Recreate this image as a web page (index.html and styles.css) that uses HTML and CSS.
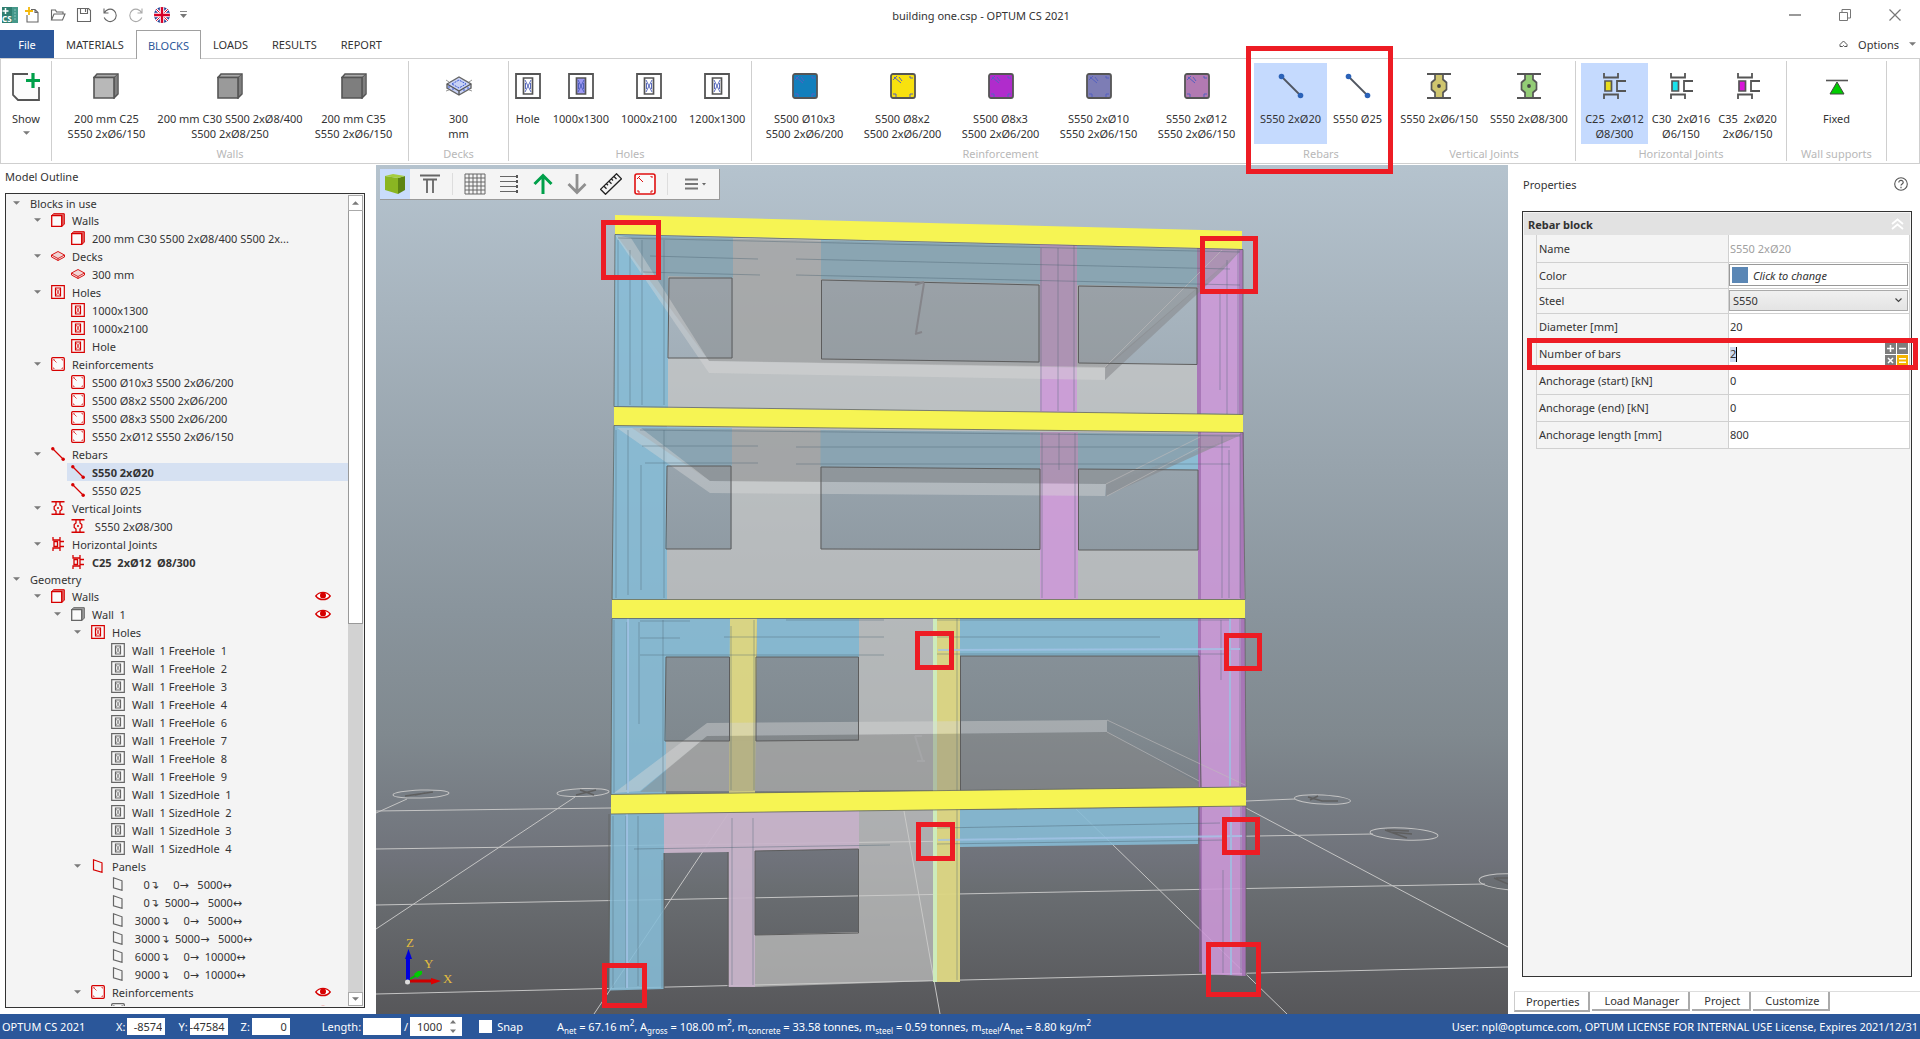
FILE: index.html
```html
<!DOCTYPE html>
<html lang="en">
<head>
<meta charset="utf-8">
<title>building one.csp - OPTUM CS 2021</title>
<link rel="stylesheet" href="styles.css">
</head>
<body>
<svg class="defs" aria-hidden="true">
  <defs>
    <symbol id="cube" viewBox="0 0 14 14"><path d="M.7 2.7 2.5.7h10.8v10.6l-2.6 2V2.7z" fill="currentColor" fill-opacity=".55" stroke="currentColor"/><path d="M.7 2.7h10v10.6h-10z" fill="#fafafa" stroke="currentColor" stroke-width="1.3"/></symbol>
    <symbol id="deck" viewBox="0 0 14 14"><path d="M.5 6 7 2.500 13.500 6v2L7 11.500.5 8z" fill="currentColor" fill-opacity=".12" stroke="currentColor" stroke-width=".9"/><path d="M.5 6 7 9.500 13.500 6M7 9.500v2" fill="none" stroke="currentColor" stroke-width=".8"/></symbol>
    <symbol id="hole" viewBox="0 0 14 14"><path d="M.7.7h12.600v12.600H.7z" fill="#fafafa" stroke="currentColor" stroke-width="1.200"/><path d="M4.500 3h5v8h-5z" fill="none" stroke="currentColor" stroke-width="1.200"/><path d="M5.500 4l3 6M8.500 4l-3 6" stroke="currentColor" stroke-width=".7"/></symbol>
    <symbol id="reinf" viewBox="0 0 14 14"><rect x=".7" y=".7" width="12.600" height="12.600" rx="1" fill="#fafafa" stroke="currentColor" stroke-width="1.300"/><path d="M2 3.500l1.500-1.500M2.500 2.500l3 3M2 11h1v1M12 11h-1v1M12 3h-1V2" fill="none" stroke="currentColor" stroke-width=".7"/></symbol>
    <symbol id="rebar" viewBox="0 0 14 14"><path d="M2 2l10 10" stroke="currentColor" stroke-width="1.300"/><circle cx="1.800" cy="1.800" r="1.700" fill="currentColor"/><circle cx="12.200" cy="12.200" r="1.700" fill="currentColor"/></symbol>
    <symbol id="vj" viewBox="0 0 14 14"><path d="M.5.8h13M.5 13.200h13" stroke="currentColor" stroke-width="1.400"/><path d="M5 1v3L3.200 5.500v3L5 10v3M9 1v3l1.800 1.500v3L9 10v3" fill="none" stroke="currentColor" stroke-width="1.300"/><circle cx="7" cy="7" r="1" fill="currentColor"/></symbol>
    <symbol id="hj" viewBox="0 0 14 14"><path d="M2 0v3h7V0M2 14v-3h7v3M13 4.500H9v5h4" fill="none" stroke="currentColor" stroke-width="1.300"/><path d="M3 4.500h3.500v5H3z" fill="none" stroke="currentColor" stroke-width="1.300"/></symbol>
    <symbol id="panel" viewBox="0 0 14 14"><path d="M2.500.8l8.500 3v9.500l-8.500-2.500z" fill="none" stroke="currentColor" stroke-width="1.200"/></symbol>
    <symbol id="eye" viewBox="0 0 16 10"><path d="M.8 5C4.500.2 11.500.2 15.200 5 11.500 9.800 4.500 9.800.8 5z" fill="#fff" stroke="#d60000" stroke-width="1.400"/><circle cx="8" cy="4.600" r="3" fill="#d60000"/></symbol>
    <symbol id="bigcube" viewBox="0 0 26 26"><path d="M1 4.500 4 1h21v20l-4 4V4.500z" fill="#aaa" stroke="#555" stroke-width="1.500"/><path d="M1 4.500h20V25H1z" fill="currentColor" stroke="#555" stroke-width="1.600"/><path d="M21 4.500 25 1M23 3v20" stroke="#555"/></symbol>
    <symbol id="bighole" viewBox="0 0 26 26"><path d="M1 1h24v24H1z" fill="#fff" stroke="#555" stroke-width="1.800"/><path d="M8.500 5h9v16h-9z" fill="currentColor" stroke="#555" stroke-width="1.700"/><path d="M10 7l6 12M16 7l-6 12M10.500 10v6M15.500 10v6" stroke="#4659b5" stroke-width=".9"/></symbol>
    <symbol id="bigreinf" viewBox="0 0 26 26"><rect x="1" y="1" width="24" height="24" rx="2" fill="currentColor" stroke="#555" stroke-width="1.800"/><path d="M3 7l4-4M4 4l7 6M9 4l3 4M3 21h3v3M23 21h-3v3M23 5h-3V3" fill="none" stroke="#5560c0" stroke-width="1"/></symbol>
    <symbol id="bigrebar" viewBox="0 0 26 26"><path d="M3 3l20 20" stroke="#4f5560" stroke-width="1.800"/><circle cx="3.500" cy="3.500" r="2.800" fill="#2b62b8"/><circle cx="22.500" cy="22.500" r="2.800" fill="#2b62b8"/></symbol>
    <symbol id="bigvj" viewBox="0 0 26 26"><path d="M9 1v5.500L5.500 9.500v7L9 19.500V25h8v-5.500l3.500-3v-7L17 6.500V1z" fill="currentColor" stroke="#555" stroke-width="1.700"/><path d="M1 1h24M1 25h24" stroke="#555" stroke-width="1.800"/><circle cx="13" cy="13" r="1.900" fill="#444"/></symbol>
    <symbol id="bighj" viewBox="0 0 26 26"><path d="M3 0v4.500h14V0M3 26v-4.500h14V26M25 8h-9v10h9" fill="none" stroke="#555" stroke-width="1.800"/><path d="M4 8h6.500v10H4z" fill="currentColor" stroke="#555" stroke-width="1.700"/></symbol>
    <symbol id="caret" viewBox="0 0 8 4"><path d="M0 0h8L4 4z" fill="currentColor"/></symbol>
  </defs>
</svg>

<header class="titlebar">
  <div class="quick">
    <svg class="ico16" viewBox="0 0 16 16"><path fill="#2f7f70" d="M0 0h16v16H0z"/><path d="M10 0h6v16h-6z" fill="#45988a"/><path d="M3.500 1v6M.5 4h6" stroke="#fff" stroke-width="1.500"/><text x="0" y="15" class="logo-text">CS</text><path d="M12 3h2M12 6h2M12 9h2M12 12h2" stroke="#8cc5bb"/></svg>
    <button aria-label="New"><svg class="ico16" viewBox="0 0 16 16"><path d="M7 2.500h4l3 3V15H3V8M11 2.500v3h3" fill="none" stroke="#666" stroke-width="1.100"/><path d="M5 0v8M1 4h8" stroke="#f4b90a" stroke-width="1.800"/></svg></button>
    <button aria-label="Open"><svg class="ico16" viewBox="0 0 16 16"><path d="M1.500 13V3h4l1 2H13v2M1.500 13l2.500-6h11l-2.500 6z" fill="none" stroke="#666" stroke-width="1.100"/></svg></button>
    <button aria-label="Save"><svg class="ico16" viewBox="0 0 16 16"><path d="M1.500 1.500h11l2 2v11h-13zM4.500 1.500v5h7v-5M9.500 2v3" fill="none" stroke="#666" stroke-width="1.100"/></svg></button>
    <button aria-label="Undo"><svg class="ico16" viewBox="0 0 16 16"><path d="M2 1.500v4.500h4.500M2.300 6a6.200 6.200 0 1 1-.1 4.500" fill="none" stroke="#666" stroke-width="1.100"/></svg></button>
    <button aria-label="Redo"><svg class="ico16" viewBox="0 0 16 16"><path d="M14 1.500v4.500H9.500M13.700 6a6.200 6.200 0 1 0 .1 4.500" fill="none" stroke="#aaa" stroke-width="1.100"/></svg></button>
    <button aria-label="Language"><svg class="ico16" viewBox="0 0 16 16"><clipPath id="fl"><circle cx="8" cy="8" r="8"/></clipPath><g clip-path="url(#fl)"><path d="M0 0h16v16H0z" fill="#1f3f94"/><path d="M0 0l16 16M16 0 0 16" stroke="#fff" stroke-width="2.600"/><path d="M0 0l16 16M16 0 0 16" stroke="#d80027" stroke-width="1"/><path d="M8 0v16M0 8h16" stroke="#fff" stroke-width="4.400"/><path d="M8 0v16M0 8h16" stroke="#d80027" stroke-width="2.400"/></g></svg></button>
    <button class="more" aria-label="More"><svg width="7" height="8" viewBox="0 0 7 8"><path d="M0 .5h7" stroke="#888"/><path d="M0 3h7L3.500 7z" fill="#777"/></svg></button>
  </div>
  <h1>building one.csp - OPTUM CS 2021</h1>
  <div class="winctl">
    <button aria-label="Minimize"><svg width="12" height="12"><path d="M0 6h12" stroke="#999" stroke-width="2"/></svg></button>
    <button aria-label="Restore"><svg width="12" height="12"><path d="M.5 3.500h8v8h-8zM3 3.500v-3h8.500v8.500H8.500" fill="none" stroke="#777"/></svg></button>
    <button aria-label="Close"><svg width="12" height="12"><path d="M.5.5l11 11M11.500.5l-11 11" stroke="#777" stroke-width="1.200"/></svg></button>
  </div>
</header>

<nav class="tabs">
  <button class="file">File</button>
  <button>MATERIALS</button>
  <button class="on">BLOCKS</button>
  <button>LOADS</button>
  <button>RESULTS</button>
  <button>REPORT</button>
  <div class="options">
    <svg width="9" height="9" viewBox="0 0 9 9"><path d="M4.500 1 8 4.500v2H5.500L4.500 5.500l-1 1H1v-2z" fill="none" stroke="#555"/></svg>
    <button>Options</button>
    <svg class="dd"><use href="#caret"/></svg>
  </div>
</nav>

<section class="ribbon" aria-label="Blocks">
  <div class="group show"><div class="tools">
    <button><svg class="big" viewBox="0 0 28 28"><path d="M16 1H1v21l5 5h21V14" fill="#fcfcfc" stroke="#555" stroke-width="1.800"/><path d="M21 0v15M14 7.500h14" stroke="#00a04a" stroke-width="3.200"/></svg><span>Show</span><svg class="dd"><use href="#caret"/></svg></button>
  </div></div>
  <div class="group walls"><div class="tools">
    <button><svg class="big c25"><use href="#bigcube"/></svg><span>200 mm C25<br>S550 2xØ6/150</span></button>
    <button><svg class="big c30"><use href="#bigcube"/></svg><span>200 mm C30 S500 2xØ8/400<br>S500 2xØ8/250</span></button>
    <button><svg class="big c35"><use href="#bigcube"/></svg><span>200 mm C35<br>S550 2xØ6/150</span></button>
  </div><h2>Walls</h2></div>
  <div class="group decks"><div class="tools">
    <button><svg class="big" viewBox="0 0 26 26"><path d="M1 11 13 4l12 7v4l-12 7L1 15z" fill="#c9d2f5" stroke="#666" stroke-width="1.400"/><path d="M1 11l12 7 12-7M13 18v4" fill="none" stroke="#555" stroke-width="1.400"/><path d="M6 11l7-4 7 4-7 4zM3 13v3M7 15v3M18 16v3M22 14v2" fill="none" stroke="#3c5bd6" stroke-dasharray="2 1"/><path d="M0 7l3 2M26 7l-3 2M0 18l3-1M26 18l-3-1" stroke="#999"/></svg><span>300<br>mm</span></button>
  </div><h2>Decks</h2></div>
  <div class="group holes"><div class="tools">
    <button><svg class="big h0"><use href="#bighole"/></svg><span>Hole</span></button>
    <button><svg class="big h1"><use href="#bighole"/></svg><span>1000x1300</span></button>
    <button><svg class="big h0"><use href="#bighole"/></svg><span>1000x2100</span></button>
    <button><svg class="big h0"><use href="#bighole"/></svg><span>1200x1300</span></button>
  </div><h2>Holes</h2></div>
  <div class="group reinf"><div class="tools">
    <button><svg class="big r1"><use href="#bigreinf"/></svg><span>S500 Ø10x3<br>S500 2xØ6/200</span></button>
    <button><svg class="big r2"><use href="#bigreinf"/></svg><span>S500 Ø8x2<br>S500 2xØ6/200</span></button>
    <button><svg class="big r3"><use href="#bigreinf"/></svg><span>S500 Ø8x3<br>S500 2xØ6/200</span></button>
    <button><svg class="big r4"><use href="#bigreinf"/></svg><span>S550 2xØ10<br>S550 2xØ6/150</span></button>
    <button><svg class="big r5"><use href="#bigreinf"/></svg><span>S550 2xØ12<br>S550 2xØ6/150</span></button>
  </div><h2>Reinforcement</h2></div>
  <div class="group rebars"><div class="tools">
    <button class="sel"><svg class="big"><use href="#bigrebar"/></svg><span>S550 2xØ20</span></button>
    <button><svg class="big"><use href="#bigrebar"/></svg><span>S550 Ø25</span></button>
  </div><h2>Rebars</h2><span class="mark"></span></div>
  <div class="group vjoints"><div class="tools">
    <button><svg class="big v1"><use href="#bigvj"/></svg><span>S550 2xØ6/150</span></button>
    <button><svg class="big v2"><use href="#bigvj"/></svg><span>S550 2xØ8/300</span></button>
  </div><h2>Vertical Joints</h2></div>
  <div class="group hjoints"><div class="tools">
    <button class="sel"><svg class="big j1"><use href="#bighj"/></svg><span>C25&nbsp; 2xØ12<br>Ø8/300</span></button>
    <button><svg class="big j2"><use href="#bighj"/></svg><span>C30&nbsp; 2xØ16<br>Ø6/150</span></button>
    <button><svg class="big j3"><use href="#bighj"/></svg><span>C35&nbsp; 2xØ20<br>2xØ6/150</span></button>
  </div><h2>Horizontal Joints</h2></div>
  <div class="group supports"><div class="tools">
    <button><svg class="big" viewBox="0 0 26 26"><path d="M2 7.500h22" stroke="#555" stroke-width="1.600"/><path d="M13 9l7 12H6z" fill="#0c0" stroke="#444"/></svg><span>Fixed</span></button>
  </div><h2>Wall supports</h2></div>
</section>

<main>
  <aside class="outline">
    <h2>Model Outline</h2>
    <div class="treebox">
      <ul class="tree">
        <li class="root"><svg class="dd"><use href="#caret"/></svg>Blocks in use</li>
        <li class="l1"><svg class="dd"><use href="#caret"/></svg><svg class="ic"><use href="#cube"/></svg>Walls</li>
        <li class="l2"><svg class="ic"><use href="#cube"/></svg>200 mm C30 S500 2xØ8/400 S500 2x...</li>
        <li class="l1"><svg class="dd"><use href="#caret"/></svg><svg class="ic"><use href="#deck"/></svg>Decks</li>
        <li class="l2"><svg class="ic"><use href="#deck"/></svg>300 mm</li>
        <li class="l1"><svg class="dd"><use href="#caret"/></svg><svg class="ic"><use href="#hole"/></svg>Holes</li>
        <li class="l2"><svg class="ic"><use href="#hole"/></svg>1000x1300</li>
        <li class="l2"><svg class="ic"><use href="#hole"/></svg>1000x2100</li>
        <li class="l2"><svg class="ic"><use href="#hole"/></svg>Hole</li>
        <li class="l1"><svg class="dd"><use href="#caret"/></svg><svg class="ic"><use href="#reinf"/></svg>Reinforcements</li>
        <li class="l2"><svg class="ic"><use href="#reinf"/></svg>S500 Ø10x3 S500 2xØ6/200</li>
        <li class="l2"><svg class="ic"><use href="#reinf"/></svg>S500 Ø8x2 S500 2xØ6/200</li>
        <li class="l2"><svg class="ic"><use href="#reinf"/></svg>S500 Ø8x3 S500 2xØ6/200</li>
        <li class="l2"><svg class="ic"><use href="#reinf"/></svg>S550 2xØ12 S550 2xØ6/150</li>
        <li class="l1"><svg class="dd"><use href="#caret"/></svg><svg class="ic"><use href="#rebar"/></svg>Rebars</li>
        <li class="l2 picked"><svg class="ic"><use href="#rebar"/></svg><b>S550 2xØ20</b></li>
        <li class="l2"><svg class="ic"><use href="#rebar"/></svg>S550 Ø25</li>
        <li class="l1"><svg class="dd"><use href="#caret"/></svg><svg class="ic"><use href="#vj"/></svg>Vertical Joints</li>
        <li class="l2"><svg class="ic"><use href="#vj"/></svg> S550 2xØ8/300</li>
        <li class="l1"><svg class="dd"><use href="#caret"/></svg><svg class="ic"><use href="#hj"/></svg>Horizontal Joints</li>
        <li class="l2"><svg class="ic"><use href="#hj"/></svg><b>C25  2xØ12  Ø8/300</b></li>
        <li class="root"><svg class="dd"><use href="#caret"/></svg>Geometry</li>
        <li class="l1"><svg class="dd"><use href="#caret"/></svg><svg class="ic"><use href="#cube"/></svg>Walls<svg class="eye"><use href="#eye"/></svg></li>
        <li class="l2 open grey"><svg class="dd"><use href="#caret"/></svg><svg class="ic"><use href="#cube"/></svg>Wall  1<svg class="eye"><use href="#eye"/></svg></li>
        <li class="l3"><svg class="dd"><use href="#caret"/></svg><svg class="ic"><use href="#hole"/></svg>Holes</li>
        <li class="l4 grey"><svg class="ic"><use href="#hole"/></svg>Wall  1 FreeHole  1</li>
        <li class="l4 grey"><svg class="ic"><use href="#hole"/></svg>Wall  1 FreeHole  2</li>
        <li class="l4 grey"><svg class="ic"><use href="#hole"/></svg>Wall  1 FreeHole  3</li>
        <li class="l4 grey"><svg class="ic"><use href="#hole"/></svg>Wall  1 FreeHole  4</li>
        <li class="l4 grey"><svg class="ic"><use href="#hole"/></svg>Wall  1 FreeHole  6</li>
        <li class="l4 grey"><svg class="ic"><use href="#hole"/></svg>Wall  1 FreeHole  7</li>
        <li class="l4 grey"><svg class="ic"><use href="#hole"/></svg>Wall  1 FreeHole  8</li>
        <li class="l4 grey"><svg class="ic"><use href="#hole"/></svg>Wall  1 FreeHole  9</li>
        <li class="l4 grey"><svg class="ic"><use href="#hole"/></svg>Wall  1 SizedHole  1</li>
        <li class="l4 grey"><svg class="ic"><use href="#hole"/></svg>Wall  1 SizedHole  2</li>
        <li class="l4 grey"><svg class="ic"><use href="#hole"/></svg>Wall  1 SizedHole  3</li>
        <li class="l4 grey"><svg class="ic"><use href="#hole"/></svg>Wall  1 SizedHole  4</li>
        <li class="l3"><svg class="dd"><use href="#caret"/></svg><svg class="ic"><use href="#panel"/></svg>Panels</li>
        <li class="l4 grey"><svg class="ic"><use href="#panel"/></svg>    0↴     0→   5000↔</li>
        <li class="l4 grey"><svg class="ic"><use href="#panel"/></svg>    0↴  5000→   5000↔</li>
        <li class="l4 grey"><svg class="ic"><use href="#panel"/></svg> 3000↴     0→   5000↔</li>
        <li class="l4 grey"><svg class="ic"><use href="#panel"/></svg> 3000↴  5000→   5000↔</li>
        <li class="l4 grey"><svg class="ic"><use href="#panel"/></svg> 6000↴     0→  10000↔</li>
        <li class="l4 grey"><svg class="ic"><use href="#panel"/></svg> 9000↴     0→  10000↔</li>
        <li class="l3"><svg class="dd"><use href="#caret"/></svg><svg class="ic"><use href="#reinf"/></svg>Reinforcements<svg class="eye"><use href="#eye"/></svg></li>
        <li class="l4 grey"><svg class="ic"><use href="#reinf"/></svg>Reinforcement<svg class="eye"><use href="#eye"/></svg></li>
      </ul>
      <div class="scroll">
        <button class="up" aria-label="Scroll up"><svg class="dd"><use href="#caret"/></svg></button>
        <div class="thumb"></div>
        <div class="track"></div>
        <button aria-label="Scroll down"><svg class="dd"><use href="#caret"/></svg></button>
      </div>
    </div>
  </aside>

  <section class="view" aria-label="3D view">
    <svg class="scene" viewBox="376 165 1132 849" preserveAspectRatio="xMidYMid slice">
      <defs><linearGradient id="sky" x1="0" y1="0" x2="0" y2="1">
        <stop offset="0" stop-color="#b5c3ce"/><stop offset=".53" stop-color="#89949c"/><stop offset=".67" stop-color="#80898f"/><stop offset=".82" stop-color="#6f727a"/><stop offset=".85" stop-color="#6a6e72"/><stop offset="1" stop-color="#57575a"/>
      </linearGradient></defs>
      <path d="M376 165h1132v849H376z" fill="url(#sky)"/>
      <g class="grid">
        <path d="M376 811 611 808M376 849 960 841M376 905 1485 884M376 994 1508 967M1246 801 1295 799M1200 837 1373 834M376 813 407 799M376 929 575 797M594 1014 728 814M904 811 940 1014M1076 809 1287 1014M1246 808 1508 947"/>
        <ellipse cx="421" cy="794" rx="28" ry="4" transform="rotate(-2 421 794)"/><ellipse cx="583" cy="792.500" rx="26" ry="4" transform="rotate(-2 583 792)"/>
        <ellipse cx="1322.500" cy="799.500" rx="28" ry="4.500" transform="rotate(3 1322 799)"/><ellipse cx="1404" cy="834" rx="34" ry="6" transform="rotate(3 1404 834)"/><ellipse cx="1513" cy="882" rx="34" ry="8" transform="rotate(3 1513 882)"/>
      </g>
      <path class="mark3d" d="M405 796l28-4M415 795l10-2M576 795l20-5M580 790l14 5M1308 797l14 4 16 0M1310 800l8-4M1385 830l22 8M1387 830l22 1M1390 832l22 2M1494 878l14 6M1496 878h12"/>
      <g class="concrete">
        <path fill-rule="evenodd" d="M668 236 1197 248V414L668 408zM669 278H733V358H669zM821 280 1040 285V363L821 359zM1078 286 1197 288V364L1078 363z"/>
        <path fill-rule="evenodd" d="M667 426 1198 432V600H667zM667 466H731.500V549H667zM820.500 467 1040 469V550L820.500 549zM1078 469 1198 470V550H1078z"/>
        <path d="M859 618h75v172h-75zM666 741h193v50H666zM859 811 934 809V981L755 987V935L859 932z"/>
      </g>
      <g class="blue">
        <path d="M615 234 668 236V408L614 407zM668 236 733 238V278L668 276zM821 240 1040 245V284L821 279zM1077 246 1197 249V287L1077 285z"/>
        <path d="M613.500 426 667 427V600H612.500zM667 427 732 428V466H667zM820.500 430 1040 432V469L820.500 467zM1078 433 1198 434V470L1078 469z"/>
        <path d="M612 618H666V794L611 795zM666 618H730V657H666zM757 618H859V657H757zM960 618H1198V656H960z"/>
        <path d="M611 814 664 813V989L609 990.500zM960 810 1198 807V844L960 847z"/>
      </g>
      <g class="purple">
        <path d="M1040 244 1077 245V413L1040 412zM1197 248 1243 249V414L1197 413z"/>
        <path d="M1040 432H1078V599H1040zM1198 432H1243L1245 599H1198z"/>
        <path d="M1198 618H1245L1246 787H1199zM1200 807 1246 805V976L1202 974z"/>
      </g>
      <path class="pside" d="M1197 248h4v166h-4zM1239 249h4v166h-4zM1198 432h3v167h-3zM1240 432h4v167h-4zM1198 618h3v169h-3zM1241 618h4v169h-4zM1199 806h3v166h-3zM1242 806h4v170h-4z"/>
      <g class="yellowcol"><path d="M730 618H757L755 793H729zM937 618H960V982H937z"/></g>
      <path d="M664 813 859 811V849L755 851V987H728.500V852L664 853z" fill="#c8b4ca" fill-opacity=".95"/>
      <path d="M933 618h4v364h-4z" fill="#cdebbb"/>
      <g class="deckdark">
        <path d="M617 236 709 361 1106 368 1241 250z"/><path d="M632 428 710 481 1106 484 1243 434z"/><path d="M707 736 1107 732 1199 784 1199 789 640 792z"/>
      </g>
      <g class="decklight">
        <path d="M709 361 1106 367 1105 380 709 373zM615 235 631 238 709 361V373z"/>
        <path d="M710 481 1106 484 1105 496 710 493zM617 428 641 428 710 481V493z"/>
        <path d="M707 723 1107 720 1107 732 707 736zM614 793 707 723V736L640 791z"/>
      </g>
      <path class="deckside" d="M1105 367 1241 250 1223 270 1105 380zM1106 484 1243 434 1106 496z"/>
      <path class="deckline" d="M1107 720 1245 785M1107 732 1199 781M1105 367 1222 250M1107 496 1200 447M1106 484 1200 437"/>
      <g class="openings">
        <path d="M669 278H732V358H668zM821.500 280 1039 285V362L821.500 359zM1078.500 286 1197 288V364.500L1078.500 363z"/>
        <path d="M667 466H731V549H666zM821 467 1040 469V549.500L821 549zM1078.500 469 1198 470V550H1078.500z"/>
        <path d="M666 657H729.500V741H665zM756 657H858.500V740L756 741zM960 656H1199M960.500 656V791M1199 656 1201 787"/>
        <path d="M755 851 858.500 849V933L755 935zM664 853V990M728 852V987"/>
      </g>
      <g class="thin">
        <path d="M618 240V406M642 240V405M630 250V405M664 240V405M1041 248V411M1058 248V411M1074 245V411M1220 290V390M1227 260V414M1238 250V414"/>
        <path d="M616 430V598M628 430V595M641 465V590M664 430V598M1042 433V598M1059 433V470M1075 433V598M1222 436V598M1229 450V598M1240 434V598"/>
        <path d="M614 620V793M627 622V790M639 622V724M663 620V793M731 626V790M754 620V790M957 618V980M1221 620V680M1230 618V786M1240 618V786"/>
        <path d="M613 816V988M626 816V988M638 816V986M662 860V988M732 818V985M753 818V985M1223 870V973M1231 807V975M1241 807V973"/>
        <path d="M650 256 758 259M796 259 1230 269M643 272 760 275M796 275 1240 285M618 238 1240 252"/>
        <path d="M642 446H758M796 447H1230M645 463H758M796 464H1230M640 430 1240 436"/>
        <path d="M640 621H690M786 620H884M640 638H680M724 637H884M640 655H884M937 620H1230M937 637H1160M937 654H1230M634 849 890 845M937 828 1220 823M937 844 1225 840"/>
      </g>
      <path class="barline" d="M938 650 1240 649M938 840 1242 836M628 618V793M627 814V988M1230 618V786M1231 807V975"/>
      <path d="M924 283l-8 50M915 285l9-3M915 334l7-2" fill="none" stroke="#85858a" stroke-width="2"/>
      <path d="M915 736l8 26M915 736h7M917 761h8" fill="none" stroke="#a5a6a8" stroke-width="2"/>
      <g class="slab">
        <path d="M615 215 1242 231V249L615 234z"/><path d="M614 407 1243 414.500V432.500L614 425.500z"/><path d="M612 599.500H1245V618H612z"/><path d="M611 794.500 1246 787V806L611 814z"/>
      </g>
      <path class="slabline" d="M615 234.500 1243 249.500V414.500L614 406.500zM614 425.500 1243 432.500 1245 599.500H612zM612 618.500H1245L1246 787 611 794.500zM611 814 1246 806V976M609 990V814"/>
      <g class="redbox">
        <path d="M603.500 222.500h55v55h-55zM1202.500 238.500h53v53h-53zM604.500 965.500h40v40h-40zM1208.500 944.500h50v50h-50z"/>
        <path d="M917.500 633.500h34v34h-34zM1226.500 635.500h33v33h-33zM918.500 824.500h34v34h-34zM1224.500 819.500h33v33h-33z"/>
      </g>
      <path d="M408 980V958" stroke="#00d" stroke-width="4"/><path d="M405 959l3.500-10 3.500 10z" fill="#00d"/>
      <path d="M410 981h23" stroke="#c00" stroke-width="3"/><path d="M431 978l10 3-10 3.500z" fill="#d00"/>
      <path d="M410 979l10-6" stroke="#0b0" stroke-width="2"/><path d="M414 974l4-3h4v3l-5 4z" fill="#0c0"/><circle cx="407.500" cy="982" r="2.500" fill="#ddd"/>
      <g class="axes"><text x="406" y="947">Z</text><text x="424" y="968">Y</text><text x="443" y="983">X</text></g>
    </svg>
    <div class="viewbar">
      <button class="on" aria-label="Solid"><svg viewBox="0 0 22 22"><path d="M1 3l13 2v16L1 17z" fill="#8ab522"/><path d="M14 5l7-2v14l-7 4z" fill="#5d8414"/><path d="M1 3l8-2 12 2-7 2z" fill="#a5cd40"/></svg></button>
      <button aria-label="Supports"><svg viewBox="0 0 22 22"><path d="M1 2.500h20M4 6.500h14M8 7v13M14 7v13" stroke="#666" stroke-width="1.800"/></svg></button>
      <i></i>
      <button aria-label="Grid"><svg viewBox="0 0 22 22"><path d="M1 1h20v20H1zM5 1v20M9 1v20M13 1v20M17 1v20M1 5h20M1 9h20M1 13h20M1 17h20" fill="none" stroke="#666" stroke-width="1"/></svg></button>
      <button aria-label="Levels"><svg viewBox="0 0 22 22"><path d="M2 3.500h18M2 8.500h18M2 13.500h18M2 18.500h18" stroke="#666" stroke-width="1.200"/><path d="M18 2h2v3h-2zM18 7h2v3h-2zM18 12h2v3h-2zM18 17h2v3h-2z" fill="#555"/></svg></button>
      <button aria-label="Up"><svg viewBox="0 0 22 22"><path d="M11 21V3M2.500 11 11 2.500l8.500 8.500" fill="none" stroke="#00a04a" stroke-width="3"/></svg></button>
      <button aria-label="Down"><svg viewBox="0 0 22 22"><path d="M11 1v18M2.500 11l8.500 8.500 8.500-8.500" fill="none" stroke="#8f8f8f" stroke-width="2.800"/></svg></button>
      <button aria-label="Measure"><svg viewBox="0 0 22 22"><path d="M16.500.8l5 5L5.500 21.300l-5-5zM14 3.500l2.500 2.500M11.500 6l1.500 1.500M9 8.300l2.500 2.500M6.500 10.800l1.500 1.500M4 13.200l2.500 2.500" fill="none" stroke="#222" stroke-width="1.300"/></svg></button>
      <button aria-label="Reinforcement"><svg viewBox="0 0 22 22"><rect x="1" y="1" width="20" height="20" rx="2" fill="#fafafa" stroke="#e01010" stroke-width="1.600"/><path d="M3 6l3-3M4 4l5 5M3 18h2v2M19 18h-2v2M19 4h-2V3" fill="none" stroke="#e01010"/></svg></button>
      <i></i>
      <button class="menu" aria-label="Menu"><svg viewBox="0 0 22 22"><path d="M0 6.500h13M0 11h13M0 15.500h13" stroke="#777" stroke-width="1.800"/><path d="M17 10h4l-2 2.500z" fill="#666"/></svg></button>
    </div>
  </section>

  <aside class="props">
    <div class="head"><h2>Properties</h2><button aria-label="Help"><svg width="14" height="14" viewBox="0 0 14 14"><circle cx="7" cy="7" r="6.300" fill="none" stroke="#555" stroke-width="1.100"/><path d="M4.800 5.500c0-3 4.500-2.800 4.400 0C9.200 7 7 7 7 8.600M7 9.800v1.500" fill="none" stroke="#555" stroke-width="1.200"/></svg></button></div>
    <div class="sheet">
      <h3>Rebar block<svg width="13" height="12" viewBox="0 0 13 12"><path d="M1 6l5.500-4.500L12 6M1 11l5.500-4.500L12 11" fill="none" stroke="#fff" stroke-width="1.800"/></svg></h3>
      <table>
        <tr><th><label for="p1">Name</label></th><td><input id="p1" value="S550 2xØ20" disabled></td></tr>
        <tr class="r26"><th><label for="p2">Color</label></th><td><button id="p2" class="color"><span></span>Click to change</button></td></tr>
        <tr class="r25"><th><label for="p3">Steel</label></th><td><div class="pick"><select id="p3"><option>S550</option></select><svg width="7" height="5" viewBox="0 0 7 5"><path d="M.5.5l3 3 3-3" fill="none" stroke="#444" stroke-width="1.200"/></svg></div></td></tr>
        <tr><th><label for="p4">Diameter [mm]</label></th><td><input id="p4" value="20"></td></tr>
        <tr class="hot"><th><label for="p5">Number of bars</label></th><td><input id="p5" class="editing" value="2"><svg class="calc" width="23" height="23" viewBox="0 0 23 23"><path d="M0 0h11v11H0zM12 0h11v11H12zM0 12h11v11H0z" fill="#7d7d7d"/><path d="M12 12h11v11H12z" fill="#f4b400"/><path d="M5.500 2v7M2 5.500h7M14 5.500h7M3 15l5 5M8 15l-5 5M14 15.700h7M14 19.300h7" stroke="#fff" stroke-width="1.500"/></svg><span class="mark"></span></td></tr>
        <tr><th><label for="p6">Anchorage (start) [kN]</label></th><td><input id="p6" value="0"></td></tr>
        <tr><th><label for="p7">Anchorage (end) [kN]</label></th><td><input id="p7" value="0"></td></tr>
        <tr><th><label for="p8">Anchorage length [mm]</label></th><td><input id="p8" value="800"></td></tr>
      </table>
    </div>
    <div class="ptabs"><button class="on">Properties</button><button>Load Manager</button><button>Project</button><button>Customize</button></div>
  </aside>
</main>

<footer>
  <span class="app">OPTUM CS 2021</span>
  <label>X:<input value="-8574"></label>
  <label>Y:<input value="-47584"></label>
  <label>Z:<input value="0"></label>
  <label class="len">Length:<input value=""></label>
  <label class="scale">/<input value="1000"><svg width="6" height="13" viewBox="0 0 6 13"><path d="M0 3.500 3 0l3 3.500zM0 9.500 3 13l3-3.500z" fill="#777"/></svg></label>
  <label class="snap"><input type="checkbox">Snap</label>
  <span>A<sub>net</sub> = 67.16 m<sup>2</sup>, A<sub>gross</sub> = 108.00 m<sup>2</sup>, m<sub>concrete</sub> = 33.58 tonnes, m<sub>steel</sub> = 0.59 tonnes, m<sub>steel</sub>/A<sub>net</sub> = 8.80 kg/m<sup>2</sup></span>
  <span class="user">User: npl@optumce.com, OPTUM LICENSE FOR INTERNAL USE License, Expires 2021/12/31</span>
</footer>
</body>
</html>
```
FILE: styles.css
```css
* { box-sizing: border-box; }
body {
  margin: 0; height: 100vh; display: flex; flex-direction: column; overflow: hidden;
  font: 11px/15px "Noto Sans", "DejaVu Sans", sans-serif; color: #333; background: #fff;
}
h1, h2, h3 { margin: 0; font: inherit; }
button, input, select { font: inherit; color: inherit; margin: 0; padding: 0; border: 0; background: none; border-radius: 0; }
svg { display: block; flex: none; }
.defs { position: absolute; width: 0; height: 0; }
.dd { width: 7px; height: 4px; color: #7a7a7a; }

/* Title bar */
.titlebar { display: flex; align-items: center; height: 30px; flex: none; }
.quick { display: flex; align-items: center; gap: 10px; padding-left: 2px; }
.quick > svg { margin-right: -4px; }
.ico16 { width: 16px; height: 16px; }
.logo-text { font: bold 8px "Noto Sans", sans-serif; fill: #fff; }
.more { width: 12px; }
.titlebar h1 { flex: 1; text-align: center; }
.winctl { display: flex; }
.winctl button { width: 50px; height: 28px; display: grid; place-items: center; }

/* Ribbon tabs */
.tabs { display: flex; height: 28px; flex: none; }
.tabs > button { padding: 0 12px; }
.tabs .file { width: 54px; background: #2b579a; color: #fff; }
.tabs .on { color: #2b579a; background: #fff; border: 1px solid #a0a0a0; border-bottom: 0; height: 29px; z-index: 1; padding: 0 11px; }
.options { margin-left: auto; display: flex; align-items: center; gap: 10px; padding-right: 4px; }

/* Ribbon */
.ribbon { display: flex; height: 106px; flex: none; border: 1px solid #cfcfcf; padding: 2px 0; position: relative; margin-bottom: 1px; }
.group { display: flex; flex-direction: column; border-right: 1px solid #cfcfcf; position: relative; }
.tools { display: flex; justify-content: center; height: 84px; padding-top: 2px; }
.tools button { height: 81px; padding: 10px 6px 0; display: flex; flex-direction: column; align-items: center; justify-content: flex-start; white-space: nowrap; }
.tools .sel { background: #c5dafe; }
.big { width: 26px; height: 26px; margin-bottom: 12px; }
.tools .dd { margin-top: 5px; }
.group h2 { color: #b8b8b8; text-align: center; padding-top: 2px; }
.show { width: 51px; }
.show .big { width: 28px; height: 28px; margin-bottom: 10px; }
.walls { width: 357px; }
.decks { width: 100px; }
.holes { width: 243px; }
.reinf { width: 498px; }
.reinf .tools button { width: 98px; }
.rebars { width: 143px; }
.vjoints { width: 183px; }
.hjoints { width: 211px; }
.hjoints .tools button { padding-inline: 4px; }
.supports { width: 100px; }
.c25 { color: #b8b8b8; } .c30 { color: #9a9a9a; } .c35 { color: #7e7e7e; }
.h0 { color: #fff; } .h1 { color: #9d98f2; }
.r1 { color: #127fbc; } .r2 { color: #f8e10f; } .r3 { color: #b02ccc; } .r4 { color: #7d7db5; } .r5 { color: #b27ab2; }
.v1 { color: #cfc56e; } .v2 { color: #93cc76; }
.j1 { color: #e8dc1c; } .j2 { color: #19e3ec; } .j3 { color: #d815d8; }
.mark { position: absolute; border: 5px solid #ed1c24; pointer-events: none; z-index: 3; }
.rebars .mark { inset: -15px -1px -13px -4px; }

/* Main area */
main { flex: 1; display: flex; min-height: 0; }
.outline { width: 376px; flex: none; display: flex; flex-direction: column; padding: 4px 11px 6px 5px; }
.outline h2 { height: 24px; line-height: 15px; }
.treebox { flex: 1; min-height: 0; display: flex; border: 1px solid #333; background: #f4f4f4; padding: 1px 1px 1px 0; }
.tree { list-style: none; margin: 0; padding: 0; flex: 1; overflow: hidden; }
.tree li { height: 18px; display: flex; align-items: center; white-space: pre; }
.tree .root { height: 16px; padding-left: 7px; }
.tree .dd { margin-right: 10px; }
.ic { width: 14px; height: 14px; margin-right: 7px; color: #d60000; }
.grey .ic { color: #666; }
.l1 { padding-left: 28px; }
.l2 { padding-left: 65px; }
.l2.open { padding-left: 48px; }
.l3 { padding-left: 68px; }
.l4 { padding-left: 105px; }
.picked { background: linear-gradient(90deg, transparent 61px, #d6e1f2 61px); }
.eye { width: 16px; height: 10px; margin-left: auto; margin-right: 17px; }
.scroll { width: 15px; display: flex; flex-direction: column; }
.scroll button { height: 14px; background: #fff; border: 1px solid #aaa; display: grid; place-items: center; }
.scroll .up { height: 16px; }
.up .dd { transform: rotate(180deg); }
.thumb { flex: 414; background: #fff; border: 1px solid #999; border-top: 0; }
.track { flex: 369; background: #d2d2d2; }

.view { flex: 1; min-width: 0; position: relative; background: #808990; }
.scene { width: 100%; height: 100%; }
.viewbar { position: absolute; left: 4px; top: 4px; height: 31px; display: flex; align-items: center; background: #f4f4f4; border-right: 1px solid #999; border-bottom: 1px solid #999; }
.viewbar button { width: 34px; height: 30px; display: grid; place-items: center; }
.viewbar .on { background: #c9dcfb; width: 30px; margin-right: 3px; }
.viewbar svg { width: 22px; height: 22px; }
.viewbar i { width: 1px; height: 22px; background: #ddd; margin: 0 5px; }
.viewbar .menu { width: 46px; }
.grid { fill: none; stroke: #c4c4c4; }
.mark3d { fill: none; stroke: #5f5f5f; stroke-width: 1.5; }
.concrete { fill: #ccccca; fill-opacity: .66; }
.blue { fill: #86bcd6; fill-opacity: .88; }
.purple { fill: #cd98d8; fill-opacity: .88; }
.pside { fill: #9460a5; fill-opacity: .6; }
.yellowcol { fill: #dcd683; fill-opacity: .97; }
.deckdark { fill: #868686; fill-opacity: .44; }
.decklight { fill: #d8d8d8; fill-opacity: .42; }
.deckside { fill: #898b8d; fill-opacity: .6; }
.deckline { fill: none; stroke: #c0bcbc; stroke-opacity: .6; }
.openings { fill: none; stroke: #5d5d5d; stroke-width: 1; }
.thin { fill: none; stroke: #4d6573; stroke-opacity: .42; }
.barline { fill: none; stroke: #a3c3e6; stroke-width: 2; stroke-opacity: .8; }
.slab { fill: #f6f453; }
.slabline { fill: none; stroke: #5d625d; stroke-opacity: .75; }
.redbox { fill: none; stroke: #ed1c24; stroke-width: 5; }
.axes { font: 13px "Liberation Serif", serif; fill: #e3bd3f; }

/* Properties */
.props { width: 412px; flex: none; display: flex; flex-direction: column; }
.head { display: flex; justify-content: space-between; align-items: flex-start; padding: 12px 12px 0 15px; height: 46px; }
.sheet { flex: 1; margin: 0 8px 0 14px; border: 1px solid #333; background: #f4f4f4; padding: 1px; }
.sheet h3 { display: flex; align-items: center; justify-content: space-between; height: 22px; padding: 0 6px 0 4px; background: #e2e2e2; font-weight: bold; }
.sheet table { width: calc(100% - 12px); margin-left: 12px; border-collapse: collapse; table-layout: fixed; }
.sheet tr { height: 27px; }
.sheet .r26 { height: 26px; }
.sheet .r25 { height: 25px; }
.sheet th, .sheet td { border: 1px solid #d0d0d0; border-top: 0; text-align: left; font-weight: normal; }
.sheet th { width: 192px; padding: 0 0 0 2px; }
.sheet td { padding: 1px 1px 1px 0; position: relative; background: #fff; background-clip: padding-box; }
.sheet td input { display: block; width: 100%; height: 22px; padding-left: 1px; background: #fff; }
.sheet td input:disabled { color: #a0a0a0; }
.color { display: flex; align-items: center; width: 100%; height: 22px; border: 1px solid #999; padding: 0 2px; font-style: italic; }
.color span { width: 16px; height: 16px; background: #5b87b5; margin-right: 5px; }
.pick { position: relative; }
.pick select { display: block; width: 100%; height: 21px; border: 1px solid #aaa; padding-left: 3px; background: linear-gradient(#f0f0f0, #e4e4e4); appearance: none; }
.pick svg { position: absolute; right: 6px; top: 8px; }
.sheet td .editing { background: linear-gradient(90deg, transparent 1px, #cddaf0 1px 7px, #000 7px 8px, transparent 8px) 0 4px / 10px 15px no-repeat #fff; }
.calc { position: absolute; right: 1px; top: 2px; }
.hot .mark { inset: -3px -9px -3px -202px; }
.ptabs { display: flex; gap: 2px; margin: 14px 0 2px 6px; height: 21px; border-top: 1px solid #ddd; }
.ptabs button { height: 19px; padding: 0 9px 0 12px; border: 1px solid #aaa; border-width: 0 2px 2px 0; }
.ptabs .on { height: 20px; padding-left: 11px; border-left: 1px solid #ccc; }

/* Status bar */
footer { height: 25px; flex: none; display: flex; align-items: center; background: #2b579a; color: #fff; padding: 0 2px; white-space: nowrap; }
footer label { display: flex; align-items: center; gap: 2px; margin-right: 13px; }
footer input { width: 38px; height: 17px; background: #fff; color: #333; text-align: right; padding-right: 3px; }
.app { width: 114px; }
.len { margin-left: 19px; }
footer .len { margin-right: 3px; }
.scale { position: relative; }
.scale input { width: 52px; height: 19px; padding-right: 20px; }
.scale svg { position: absolute; right: 6px; top: 3px; }
footer .snap { gap: 5px; margin: 0 34px 0 4px; }
.snap input { appearance: none; width: 13px; height: 13px; padding: 0; }
sub, sup { font-size: 8px; line-height: 0; }
.user { margin-left: auto; }
```
